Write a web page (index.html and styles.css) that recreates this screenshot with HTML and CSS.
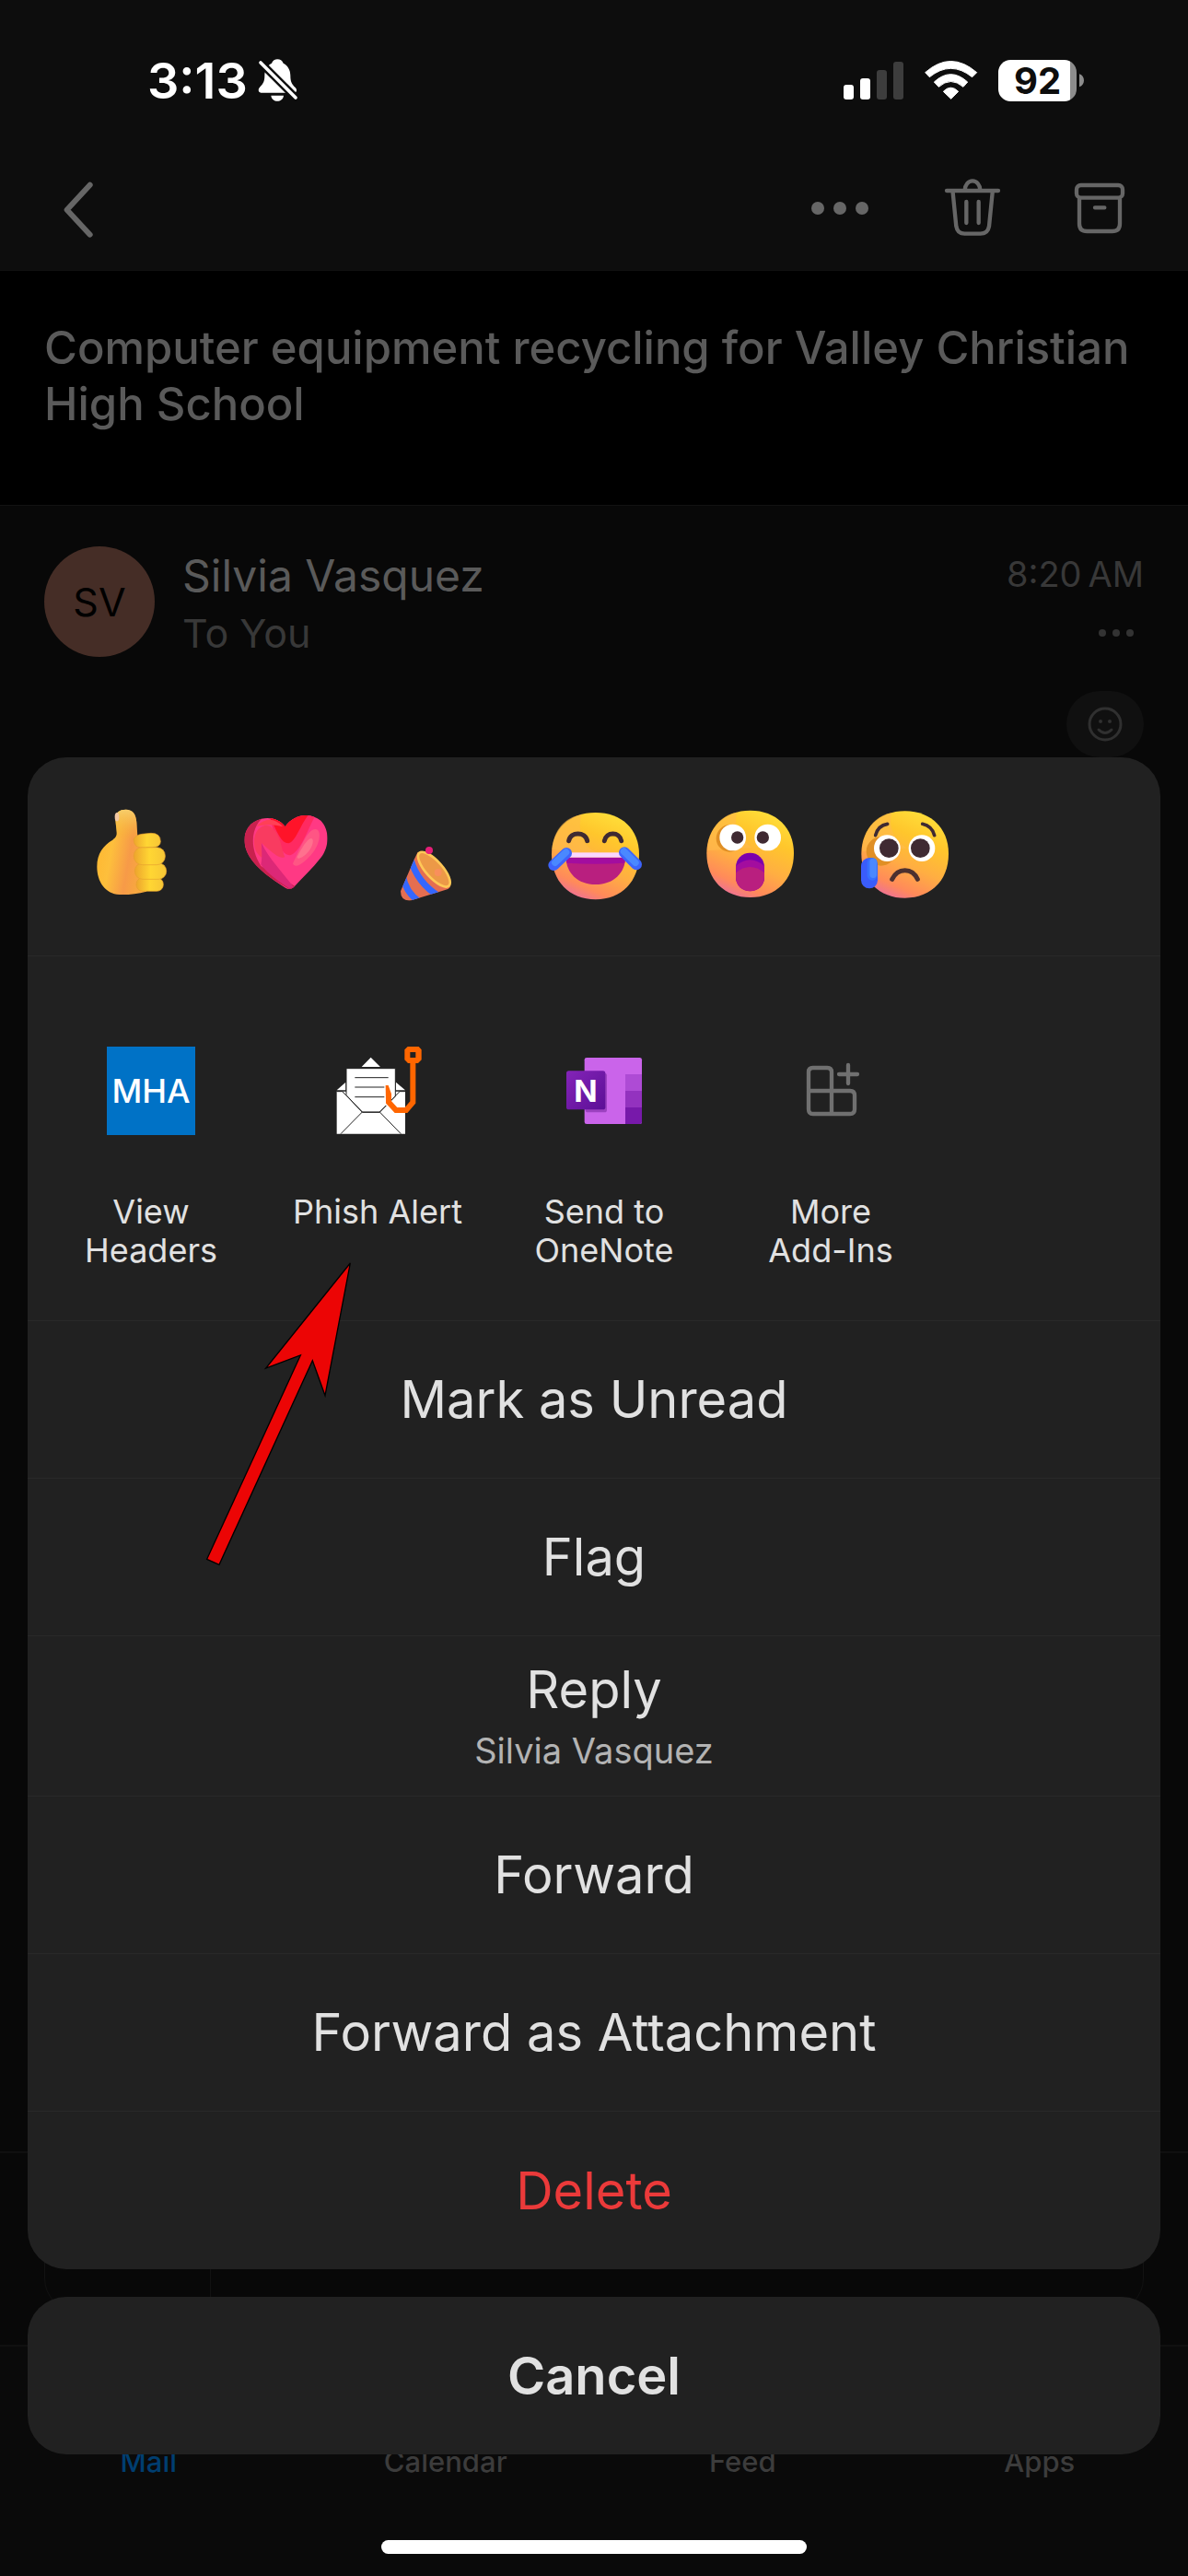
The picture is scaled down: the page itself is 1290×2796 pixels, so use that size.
FILE: index.html
```html
<!DOCTYPE html>
<html lang="en">
<head>
    <meta charset="UTF-8">
    <meta name="viewport" content="width=device-width, initial-scale=1.0">
    <title>Mail</title>
    <link rel="stylesheet" href="styles.css">
</head>
<body>
    <div class="page">
        <header class="top">
            <div class="status">
                <span class="clock">3:13</span>
                <svg class="bell" viewBox="720 72 132 144" aria-hidden="true">
                    <path fill="#fff" d="M784 76c8 0 16 4 19 13 15 8 23 22 23 40 0 20 4 28 16 39 8 8 3 17-4 17H730c-8 0-11-10-4-18 12-12 16-19 16-38 0-18 8-32 23-40 3-9 11-13 19-13zM763 194h41c-3 24-38 24-41 0z"/>
                    <path stroke="#0d0d0d" stroke-width="25" d="M722 80l128 128"/>
                    <path stroke="#fff" stroke-width="11" stroke-linecap="round" d="M729 87l114 114"/>
                </svg>
                <div class="status-right">
                    <svg class="signal" viewBox="48 78 195 123" aria-hidden="true">
                        <g fill="#fff">
                            <rect x="48" y="153" width="33" height="48" rx="9"/>
                            <rect x="102" y="132" width="33" height="69" rx="9"/>
                        </g>
                        <g fill="#3d3d3d">
                            <rect x="156" y="105" width="33" height="96" rx="9"/>
                            <rect x="210" y="78" width="33" height="123" rx="9"/>
                        </g>
                    </svg>
                    <svg class="wifi" viewBox="309 72 177 132" aria-hidden="true">
                        <g fill="#fff" stroke="#fff" stroke-width="3" stroke-linejoin="round">
                            <path d="M314 113Q397 40 482 113L467 128Q397 72 328 128Z"/>
                            <path d="M343 144Q397 94 452 144L438 160Q397 125 358 160Z"/>
                            <path d="M373 175Q397 150 422 175L398 199Z"/>
                        </g>
                    </svg>
                    <svg class="battery" viewBox="552 72 279 135" role="img">
                        <clipPath id="cell"><rect x="552" y="72" width="255" height="135" rx="40"/></clipPath>
                        <g clip-path="url(#cell)">
                            <rect x="552" y="72" width="234" height="135" fill="#fff"/>
                            <rect x="786" y="72" width="21" height="135" fill="#8c8c8c"/>
                        </g>
                        <path fill="#8c8c8c" d="M816 118c20 6 20 36 0 42z"/>
                        <text class="level" x="680" y="183" text-anchor="middle">92</text>
                    </svg>
                </div>
            </div>
            <nav class="toolbar">
                <button class="tool" aria-label="Back">
                    <svg class="tool-icon" viewBox="51 462 198 198"><path stroke-width="18" d="M173 482L98 563L173 644"/></svg>
                </button>
                <div class="tools">
                    <button class="tool" aria-label="More">
                        <svg class="dots" viewBox="0 0 78 66"><circle cx="15" cy="32" r="7"/><circle cx="39" cy="32" r="7"/><circle cx="63" cy="32" r="7"/></svg>
                    </button>
                    <button class="tool" aria-label="Delete message">
                        <svg class="tool-icon" viewBox="369 462 198 198"><path d="M384 501H552M443 499a25 30 0 0 1 50 0M404 507L415 617Q419 641 442 641H494Q518 641 522 617L533 507M448 537V606M488 537V606"/></svg>
                    </button>
                    <button class="tool" aria-label="Archive">
                        <svg class="tool-icon" viewBox="783 462 198 198"><rect x="807" y="483" width="150" height="41" rx="14"/><path d="M816 528V608Q816 633 841 633H923Q948 633 948 608V528M867 556H898"/></svg>
                    </button>
                </div>
            </nav>
        </header>

        <h1 class="subject">Computer equipment recycling for Valley Christian High School</h1>

        <main class="message">
            <div class="sender">
                <span class="avatar">SV</span>
                <div class="who">
                    <div class="name">Silvia Vasquez</div>
                    <div class="to">To You</div>
                </div>
                <div class="meta">
                    <time class="time">8:20&#8239;AM</time>
                    <button class="tool" aria-label="Message options">
                        <svg class="small-dots" viewBox="0 0 42 12"><circle cx="6" cy="6" r="4"/><circle cx="21" cy="6" r="4"/><circle cx="36" cy="6" r="4"/></svg>
                    </button>
                </div>
            </div>
            <button class="react" aria-label="React">
                <svg class="smile" viewBox="0 0 38 38"><circle cx="19" cy="19" r="17"/><path d="M12 25q7 7 14 0"/><circle class="eye" cx="14" cy="16" r="2"/><circle class="eye" cx="24" cy="16" r="2"/></svg>
            </button>
        </main>

        <div class="reply-bar">
            <button class="reply-box">
                <span class="reply-arrow"></span>
                <span class="reply-text">Reply</span>
            </button>
        </div>
        <nav class="tabs">
            <a class="tab active" href="#">Mail</a>
            <a class="tab" href="#">Calendar</a>
            <a class="tab" href="#">Feed</a>
            <a class="tab" href="#">Apps</a>
        </nav>
        <div class="home"></div>
    </div>

    <!-- action sheet -->
    <div class="overlay">
        <div class="sheet">
            <div class="emojis">
                <button class="emoji" aria-label="Like">
                    <svg viewBox="90 72 324 324">
                        <defs>
                            <linearGradient id="hand" x1="0" x2="1" y1="0" y2=".3"><stop offset="0" stop-color="#ffb52e"/><stop offset=".4" stop-color="#fdbf3c"/><stop offset=".75" stop-color="#f79a48"/><stop offset="1" stop-color="#f8a83f"/></linearGradient>
                            <linearGradient id="thumb" x1="0" x2="0" y1="0" y2="1"><stop offset="0" stop-color="#f7cd6c"/><stop offset="1" stop-color="#f5b02b" stop-opacity="0"/></linearGradient>
                            <linearGradient id="finger" x1="0" x2="1" y1="0" y2="0"><stop offset="0" stop-color="#eda52d"/><stop offset=".5" stop-color="#ffd633"/><stop offset="1" stop-color="#f6c636"/></linearGradient>
                        </defs>
                        <path fill="url(#hand)" d="M199 120C198 95 212 86 233 86C255 86 266 100 268 128L271 172L300 190V353C270 361 240 364 212 363C165 360 139 320 139 272C139 228 160 203 190 185C201 177 204 171 203 160Z"/>
                        <path fill="url(#thumb)" d="M199 120C198 95 212 86 233 86C255 86 266 100 268 128L271 185H195C201 177 204 171 203 160Z"/>
                        <ellipse cx="204" cy="110" rx="7" ry="14" fill="#f3c8a4"/>
                        <g fill="url(#finger)" stroke="#e5a02f" stroke-width="2">
                            <rect x="267" y="308" width="88" height="44" rx="21"/>
                            <rect x="262" y="260" width="103" height="53" rx="26"/>
                            <rect x="259" y="209" width="102" height="57" rx="27"/>
                            <path d="M258 183Q265 169 285 166L315 163Q346 163 346 190Q346 209 318 209H280Q260 209 258 183Z"/>
                        </g>
                    </svg>
                </button>
                <button class="emoji" aria-label="Heart">
                    <svg viewBox="591 72 324 324">
                        <clipPath id="heart"><path d="M749 142C730 116 700 110 672 116C630 126 613 160 617 195C623 255 690 303 750 341Q764 349 777 339C805 308 838 278 865 243C895 205 893 150 865 122C828 92 775 103 749 142Z"/></clipPath>
                        <g clip-path="url(#heart)">
                            <rect x="600" y="90" width="300" height="270" fill="#ff3984"/>
                            <path fill="#ff2a61" d="M700 120C720 180 735 235 765 235C800 225 822 150 850 100H700Z"/>
                            <path fill="#ff1329" d="M700 115C725 160 735 196 760 196C785 190 800 130 828 100H720Z"/>
                            <path fill="#c9214e" d="M605 100H700C650 115 620 190 670 270L780 335L770 350L600 250Z"/>
                            <path fill="#f93b60" d="M650 210C640 160 670 130 700 140C735 165 735 210 748 240C735 250 710 230 672 195C670 215 675 230 685 249C665 240 653 225 650 210Z"/>
                            <path fill="#dc2877" d="M670 265C690 295 735 325 762 343L777 339C740 290 695 245 672 195C672 225 675 240 670 265Z"/>
                            <path fill="#ff4056" d="M656 140Q700 98 742 142Q700 130 656 140Z"/>
                            <path fill="#ff5584" d="M774 262C795 220 820 150 847 150C867 150 864 190 845 218C825 248 782 285 774 262Z"/>
                            <path fill="#ff718e" d="M788 240C802 215 820 180 834 180C845 182 838 208 825 223C810 242 788 252 788 240Z"/>
                        </g>
                    </svg>
                </button>
                <button class="emoji" aria-label="Celebrate">
                    <svg viewBox="1095 72 324 324">
                        <clipPath id="cone"><path d="M1181 224L1287 338Q1282 345 1270 348L1160 382Q1125 386 1125 352L1170 247Z"/></clipPath>
                        <g clip-path="url(#cone)">
                            <rect x="1110" y="210" width="190" height="190" fill="#e46e51"/>
                            <g fill="none" stroke="#3467ff" stroke-width="21">
                                <path d="M1132 300Q1140 355 1188 388"/>
                                <path d="M1158 248Q1180 325 1250 368"/>
                            </g>
                        </g>
                        <ellipse cx="1234" cy="281" rx="72" ry="27" transform="rotate(48 1234 281)" fill="#ec9947" stroke="#ffc857" stroke-width="8"/>
                        <circle cx="1247" cy="291" r="12" fill="#f98f5b"/>
                        <circle cx="1218" cy="219" r="12" fill="#e61e78"/>
                    </svg>
                </button>
                <button class="emoji" aria-label="Laugh">
                    <svg viewBox="99 72 324 324">
                        <defs>
                            <linearGradient id="face" x1=".75" x2=".3" y1="0" y2="1"><stop offset="0" stop-color="#ffe03a"/><stop offset=".3" stop-color="#ffc62c"/><stop offset=".6" stop-color="#ffae42"/><stop offset=".85" stop-color="#ff8a5a"/><stop offset="1" stop-color="#ec6f9a"/></linearGradient>
                        </defs>
                        <path fill="url(#face)" d="M260 96C345 96 402 150 402 232C402 320 345 379 260 379C175 379 117 320 117 232C117 150 175 96 260 96Z"/>
                        <path fill="#ffbb4d" opacity=".6" d="M215 102C200 150 215 210 270 228L180 225L118 215C125 150 160 112 215 102Z"/>
                        <path fill="none" stroke="#3f2a32" stroke-width="15" stroke-linecap="round" d="M173 188C178 157 227 157 233 188M289 188C294 157 339 157 344 188"/>
                        <path fill="#b91f7f" d="M164 242H357C357 292 318 330 260 330S164 292 164 242Z"/>
                        <path fill="#a30d9f" d="M164 242H357Q357 252 355 260Q260 266 166 260Z"/>
                        <rect x="175" y="226" width="170" height="16" fill="#fad6ff"/>
                        <g stroke-linecap="round">
                            <path stroke="#3d64fb" stroke-width="36" d="M124 267L165 228M393 265L354 226"/>
                            <path stroke="#4a88ff" stroke-width="22" d="M128 259L164 225M390 259L352 222"/>
                        </g>
                    </svg>
                </button>
                <button class="emoji" aria-label="Surprised">
                    <svg viewBox="603 72 324 324">
                        <path fill="url(#face)" d="M764 89C848 89 906 145 906 228C906 315 848 372 764 372S622 315 622 228C622 145 680 89 764 89Z"/>
                        <path fill="#ffbb4d" opacity=".6" d="M720 95C710 140 725 180 770 210L625 220C630 150 665 105 720 95Z"/>
                        <circle cx="697" cy="180" r="44" fill="#e08f25"/>
                        <circle cx="707" cy="177" r="43" fill="#fff"/>
                        <circle cx="821" cy="177" r="43" fill="#fff"/>
                        <circle cx="722" cy="177" r="20" fill="#3f2a32"/>
                        <circle cx="805" cy="177" r="20" fill="#3f2a32"/>
                        <rect x="717" y="227" width="93" height="124" rx="46" fill="#7c00ad"/>
                        <path fill="#a30d9f" d="M717 270Q763 230 810 270V305C810 367 717 367 717 305Z"/>
                        <path fill="#b91f7f" d="M717 292Q763 254 810 292V305C810 367 717 367 717 305Z"/>
                    </svg>
                </button>
                <button class="emoji" aria-label="Sad">
                    <svg viewBox="1107 72 324 324">
                        <path fill="url(#face)" d="M1268 91C1352 91 1410 147 1410 230C1410 317 1352 374 1268 374S1126 317 1126 230C1126 147 1184 91 1268 91Z"/>
                        <path fill="#ffbb4d" opacity=".6" d="M1224 97C1214 142 1229 182 1274 212L1129 222C1134 152 1169 107 1224 97Z"/>
                        <ellipse cx="1190" cy="222" rx="48" ry="47" fill="#e08f25"/>
                        <circle cx="1210" cy="212" r="43" fill="#fff"/>
                        <circle cx="1323" cy="212" r="43" fill="#fff"/>
                        <circle cx="1216" cy="212" r="31" fill="#3f2a32"/>
                        <circle cx="1318" cy="212" r="31" fill="#3f2a32"/>
                        <path fill="none" stroke="#3f2a32" stroke-width="11" stroke-linecap="round" d="M1172 170Q1180 138 1211 133M1325 133Q1356 140 1364 170"/>
                        <path fill="none" stroke="#4c302f" stroke-width="15" stroke-linecap="round" d="M1226 313Q1240 284 1268 284T1309 313"/>
                        <rect x="1125" y="243" width="54" height="100" rx="27" fill="#3a5cfb"/>
                        <rect x="1145" y="243" width="33" height="74" rx="16" fill="#3770ff"/>
                        <rect x="1153" y="245" width="23" height="64" rx="11" fill="#4a88ff"/>
                    </svg>
                </button>
            </div>

            <div class="addins">
                <button class="addin">
                    <span class="mha">MHA</span>
                    <span>View Headers</span>
                </button>
                <button class="addin">
                    <svg viewBox="906 108 288 288" aria-hidden="true">
                        <path fill="#fff" d="M998 174L1028 143L1059 174ZM917 250L946 224V250ZM1140 250L1110 224V250ZM917 254H1140V392H917Z"/>
                        <path fill="#fff" stroke="#222" stroke-width="3" d="M948 179H1108V270L1057 321H1000L948 266Z"/>
                        <path fill="none" stroke="#222" stroke-width="3" d="M918 254H935L1000 321L930 392M1140 254H1122L1057 321L1126 392M1000 322H1057M976 209H1085M976 240H1072M976 272H1072"/>
                        <path fill="none" stroke="#fff" stroke-width="22" d="M1084 290L1112 322H1136"/>
                        <path fill="none" stroke="#f60" stroke-width="18" d="M1165 160V289L1143 315H1110L1086 289V262"/>
                        <path fill="#f60" d="M1076 234H1085L1095 262V280H1077Z"/>
                        <path fill="#f60" fill-rule="evenodd" d="M1148 108H1184L1193 118V151L1182 162H1149L1138 151V118ZM1156 126V144H1174V126Z"/>
                    </svg>
                    <span>Phish Alert</span>
                </button>
                <button class="addin">
                    <svg viewBox="204 108 288 288" aria-hidden="true">
                        <defs>
                            <linearGradient id="note" x1="0" x2="1" y1="0" y2="1"><stop offset="0" stop-color="#8424b8"/><stop offset="1" stop-color="#5c0f96"/></linearGradient>
                        </defs>
                        <rect x="284" y="144" width="187" height="216" rx="7" fill="#ca64ea"/>
                        <path fill="#ae4bd5" d="M417 198H471V252H417Z"/>
                        <path fill="#9332bf" d="M417 252H471V306H417Z"/>
                        <path fill="#7719aa" d="M417 306H471V353Q471 360 464 360H417Z"/>
                        <rect x="287" y="194" width="70" height="128" rx="8" fill="#571081" opacity=".4"/>
                        <rect x="225" y="187" width="127" height="126" rx="8" fill="url(#note)"/>
                        <text class="note-n" x="288" y="288" text-anchor="middle">N</text>
                    </svg>
                    <span>Send to<br>OneNote</span>
                </button>
                <button class="addin">
                    <svg viewBox="942 108 288 288" aria-hidden="true">
                        <path fill="none" stroke="#707070" stroke-width="13" stroke-linecap="round" stroke-linejoin="round" d="M1014 252V191Q1014 177 1028 177H1075Q1089 177 1089 191V327M1014 252V312Q1014 327 1028 327H1149Q1164 327 1164 312V267Q1164 252 1149 252H1014M1143 168V228M1113 198H1173"/>
                    </svg>
                    <span>More<br>Add-Ins</span>
                </button>
            </div>

            <button class="row">Mark as Unread</button>
            <button class="row">Flag</button>
            <button class="row reply">Reply<span class="sub">Silvia Vasquez</span></button>
            <button class="row">Forward</button>
            <button class="row">Forward as Attachment</button>
            <button class="row delete">Delete</button>

            <svg class="arrow" viewBox="66 54 486 1002" aria-hidden="true">
                <path fill="#ec0505" stroke="#000" stroke-width="4" d="M541 63L459 494L418 380L114 1045L74 1027L379 363L266 405Z"/>
            </svg>
        </div>
        <button class="cancel">Cancel</button>
    </div>
</body>
</html>
```
FILE: styles.css
```css
*{
    box-sizing: border-box;
}
body{
    margin: 0;
    background-color: #080808;
    font-family: Inter, "Liberation Sans", sans-serif;
}
button{
    padding: 0;
    border: none;
    background: none;
    color: inherit;
    font: inherit;
}
svg{
    display: block;
}
.page{
    position: relative;
    display: flex;
    flex-direction: column;
    min-height: 100vh;
}

/* status bar and toolbar */
.top{
    background-color: #0d0d0d;
    border-bottom: 1px solid #111111;
}
.status{
    display: flex;
    align-items: center;
    height: 162px;
    padding: 12px 113px 0 160px;
    color: #ffffff;
}
.clock{
    font-size: 54px;
    font-weight: 600;
}
.bell{
    width: 44px;
    height: 48px;
    margin-left: 11px;
}
.status-right{
    display: flex;
    align-items: center;
    gap: 22px;
    margin-left: auto;
}
.signal{
    width: 65px;
    height: 41px;
}
.wifi{
    width: 59px;
    height: 44px;
}
.battery{
    width: 93px;
    height: 45px;
    overflow: visible;
}
.level{
    fill: #0d0d0d;
    font-size: 120px;
    font-weight: 700;
}
.toolbar{
    display: flex;
    align-items: center;
    justify-content: space-between;
    height: 131px;
    padding: 0 63px 2px 57px;
}
.tools{
    display: flex;
    gap: 72px;
}
.tool-icon{
    width: 66px;
    height: 66px;
    fill: none;
    stroke: #666666;
    stroke-width: 13px;
    stroke-linecap: round;
    stroke-linejoin: round;
}
.dots{
    width: 78px;
    height: 66px;
    fill: #666666;
}

/* message */
.subject{
    margin: 0;
    padding: 53px 48px 79px;
    background-color: #000000;
    border-bottom: 1px solid #121212;
    color: #5a5a5a;
    font-size: 49px;
    font-weight: 500;
    line-height: 61px;
}
.message{
    display: flex;
    flex-direction: column;
    flex: 1;
    padding: 44px 48px 0;
}
.sender{
    display: flex;
    gap: 30px;
}
.avatar{
    display: flex;
    align-items: center;
    justify-content: center;
    width: 120px;
    height: 120px;
    border-radius: 50%;
    background-color: #452d26;
    color: #000000;
    font-size: 43px;
}
.name{
    color: #5a5a5a;
    font-size: 48px;
    line-height: 64px;
}
.to{
    color: #383838;
    font-size: 43px;
    line-height: 60px;
}
.meta{
    display: flex;
    flex-direction: column;
    align-items: flex-end;
    gap: 28px;
    margin-left: auto;
}
.time{
    color: #383838;
    font-size: 38px;
    line-height: 60px;
}
.small-dots{
    width: 42px;
    height: 12px;
    margin-right: 9px;
    fill: #333333;
}
.react{
    display: flex;
    align-items: center;
    justify-content: center;
    align-self: flex-end;
    width: 84px;
    height: 72px;
    margin-top: 33px;
    border-radius: 36px;
    background-color: #101010;
}
.smile{
    width: 38px;
    height: 38px;
    fill: none;
    stroke: #303030;
    stroke-width: 3px;
    stroke-linecap: round;
}
.smile .eye{
    fill: #303030;
    stroke: none;
}

/* bottom of the mail page */
.reply-bar{
    padding: 36px 48px;
    border-top: 2px solid #101010;
    border-bottom: 2px solid #101010;
}
.reply-box{
    display: flex;
    width: 100%;
    height: 136px;
    border: 1px solid #121212;
    border-radius: 36px;
    color: #383838;
    font-size: 43px;
}
.reply-arrow{
    width: 180px;
    height: 100%;
    border-right: 1px solid #121212;
}
.reply-text{
    padding: 0 36px;
    line-height: 112px;
}
.tabs{
    display: flex;
    padding: 108px 0 68px;
    background-color: #0a0a0a;
}
.tab{
    flex: 1;
    color: #3c3c3c;
    font-size: 31px;
    font-weight: 500;
    line-height: 34px;
    text-align: center;
    text-decoration: none;
}
.tab.active{
    color: #003e70;
}
.home{
    height: 39px;
    background-color: #0a0a0a;
}
.home::after{
    content: "";
    display: block;
    width: 462px;
    height: 15px;
    margin: 0 auto;
    border-radius: 8px;
    background-color: #ffffff;
}

/* action sheet, lies over the page */
.overlay{
    position: absolute;
    left: 30px;
    right: 30px;
    bottom: 132px;
    display: flex;
    flex-direction: column;
    gap: 30px;
}
.sheet, .cancel{
    border-radius: 42px;
    background-color: #212121;
    color: #e1e1e1;
}
.sheet{
    position: relative;
    display: flex;
    flex-direction: column;
}
.emojis{
    display: flex;
    height: 215px;
    padding: 52px 29px 0;
}
.emoji{
    width: 168px;
    height: 108px;
}
.emoji svg{
    width: 108px;
    height: 108px;
    margin: 0 auto;
}
.addins{
    display: flex;
    align-items: flex-start;
    height: 396px;
    padding: 98px 11px 0;
    border-top: 1px solid #292929;
}
.addin{
    display: flex;
    flex-direction: column;
    align-items: center;
    gap: 62px;
    width: 246px;
    padding: 0 40px;
    font-size: 36px;
    line-height: 42px;
    text-align: center;
}
.addin:nth-child(2){
    padding: 0;
}
.addin svg, .mha{
    width: 96px;
    height: 96px;
}
.mha{
    background-color: #0072c6;
    color: #ffffff;
    font-size: 36px;
    font-weight: 500;
    line-height: 96px;
}
.note-n{
    fill: #ffffff;
    font-size: 100px;
    font-weight: 700;
}
.row{
    display: flex;
    flex-direction: column;
    align-items: center;
    justify-content: center;
    gap: 10px;
    height: 171px;
    border-top: 1px solid #292929;
    font-size: 56px;
    line-height: 64px;
}
.row.reply{
    height: 174px;
}
.sub{
    color: #b3b3b3;
    font-size: 38px;
    line-height: 48px;
}
.row.delete{
    height: 172px;
    color: #eb3a3a;
}
.cancel{
    height: 171px;
    font-size: 56px;
    font-weight: 600;
}
.arrow{
    position: absolute;
    left: 192px;
    top: 546px;
    width: 162px;
    height: 334px;
}
```
